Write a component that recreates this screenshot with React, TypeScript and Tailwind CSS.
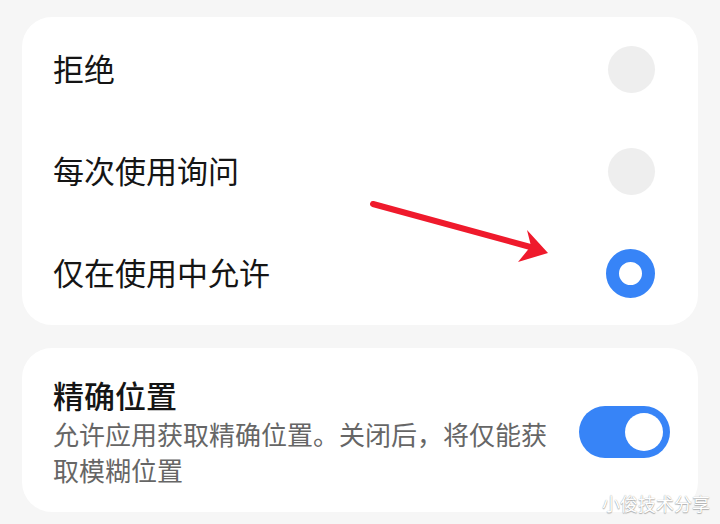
import React from 'react';

const options = [
  { label: '拒绝', checked: false },
  { label: '每次使用询问', checked: false },
  { label: '仅在使用中允许', checked: true },
];

function Radio({ checked }: { checked: boolean }) {
  if (checked) {
    return <div className="w-[49px] h-[49px] rounded-full border-[13px] border-[#3784f7] bg-white" />;
  }
  return <div className="w-[47px] h-[47px] rounded-full bg-[#eeeeee]" />;
}

export default function App() {
  return (
    <div className="relative w-[720px] h-[524px] overflow-hidden bg-[#f6f6f6] pt-[17px] px-[22px] font-['Noto_Sans_CJK_SC','Noto_Sans',sans-serif]">
      {/* location permission choices */}
      <div className="rounded-[30px] bg-white pl-[31px] pr-[43px] py-px">
        {options.map((opt) => (
          <div key={opt.label} className="h-[102px] flex items-center justify-between">
            <span className="pb-[4px] text-[31px] leading-none text-[#151515]">{opt.label}</span>
            <Radio checked={opt.checked} />
          </div>
        ))}
      </div>

      {/* precise location */}
      <div className="mt-[23px] rounded-[30px] bg-white pl-[31px] pr-[28px] pt-[27px] pb-[24px] flex items-center justify-between">
        <div className="w-[500px]">
          <div className="text-[31px] leading-[40px] font-medium text-[#151515]">精确位置</div>
          <p className="mt-px text-[26px] leading-[36px] text-[#666666]">
            允许应用获取精确位置。关闭后，将仅能获取模糊位置
          </p>
        </div>
        <div className="w-[91px] h-[52px] rounded-full bg-[#3784f7] p-[7px] flex justify-end">
          <div className="w-[38px] h-[38px] rounded-full bg-white" />
        </div>
      </div>

      {/* annotation arrow */}
      <svg className="absolute left-0 top-0 pointer-events-none" width="720" height="524" viewBox="0 0 720 524">
        <line x1="373" y1="204" x2="534" y2="248" stroke="#ef1a2c" strokeWidth="6" strokeLinecap="round" />
        <polygon points="548,253 527,230 531,246 518,262" fill="#ef1a2c" />
      </svg>

      {/* watermark */}
      <div className="absolute left-[602px] top-[494px] text-[18px] leading-none text-white [text-shadow:0_0_1px_#9a9a9a,0_1px_1px_#b0b0b0] font-['Noto_Sans_CJK_SC',sans-serif]">
        小俊技术分享
      </div>
    </div>
  );
}
